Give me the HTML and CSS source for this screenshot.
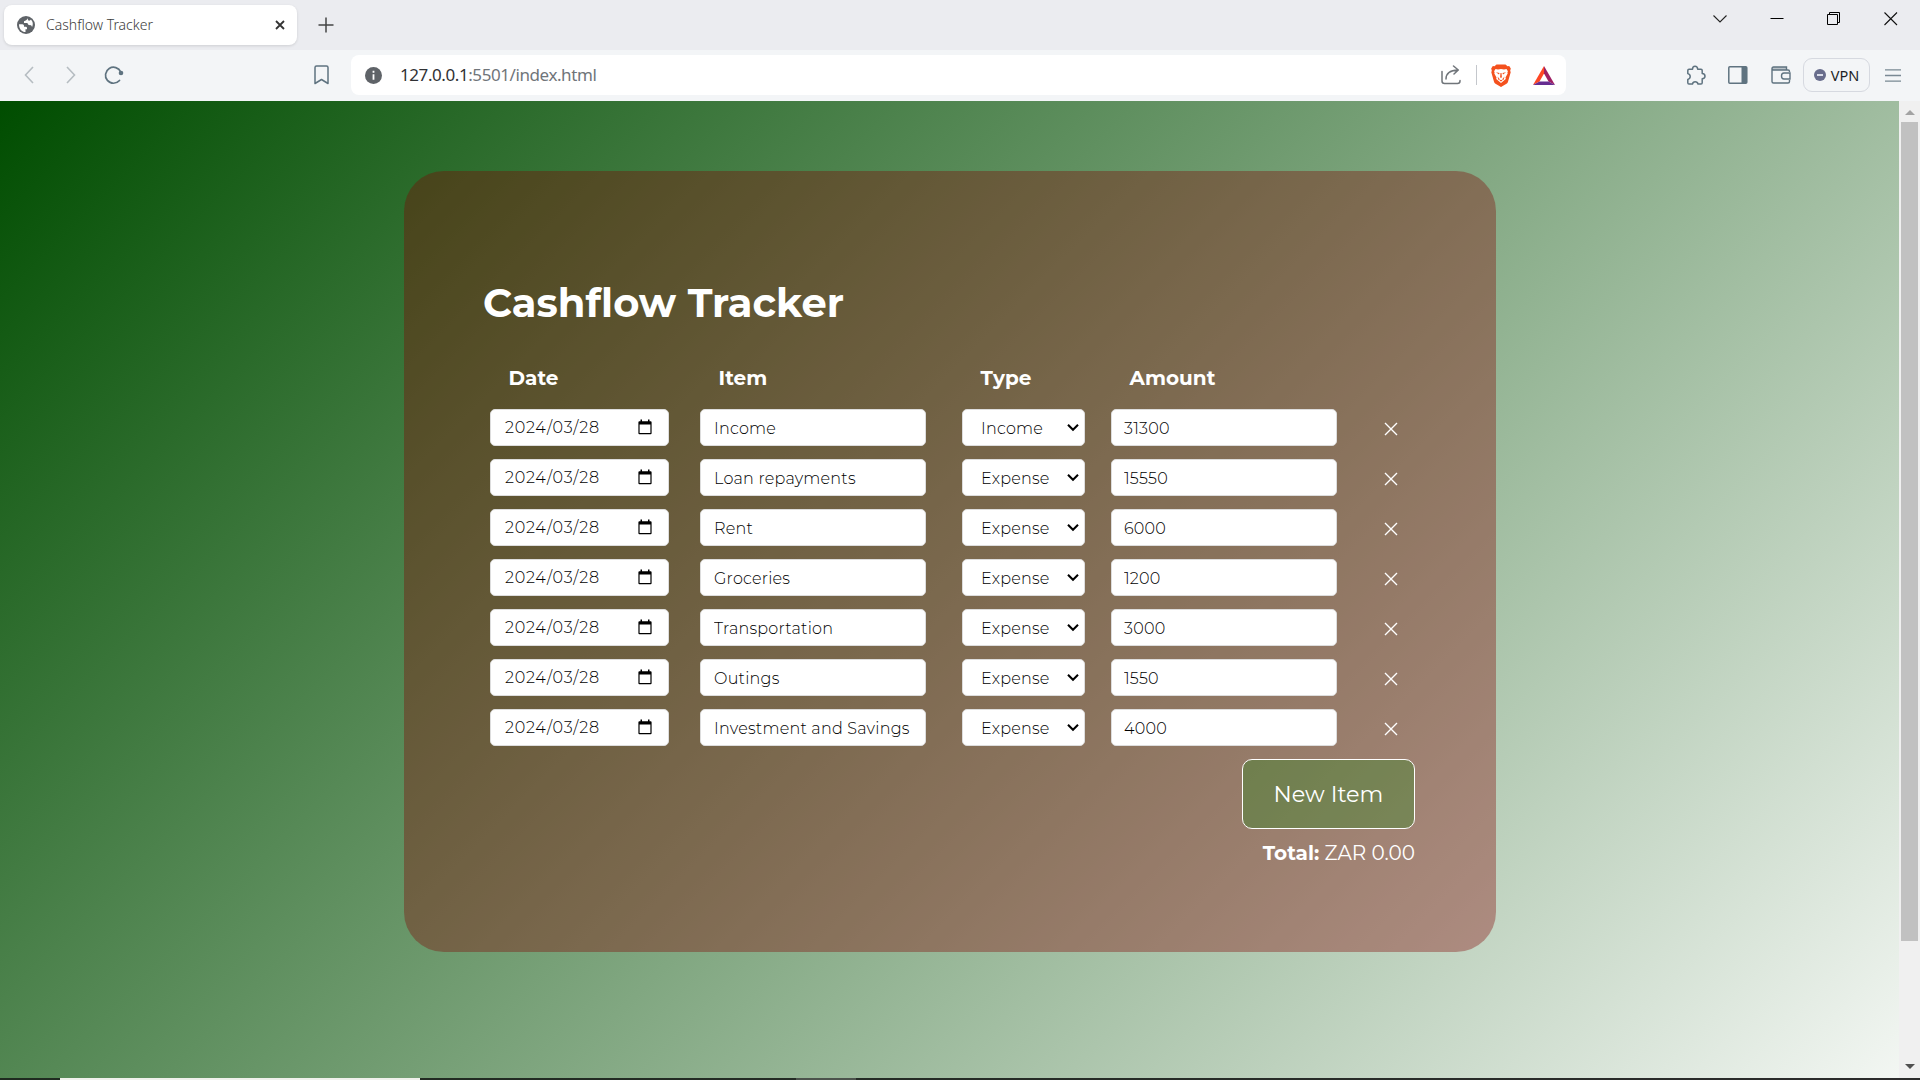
FILE: index.html
```html
<!DOCTYPE html>
<html lang="en">
<head>
<meta charset="utf-8">
<title>Cashflow Tracker</title>
<link rel="stylesheet" href="styles.css">
</head>
<body>
<svg class="defs" aria-hidden="true">
  <symbol id="cal" viewBox="0 0 14 16"><path d="M2.500 0.500h1.500v1.700h6V0.500h1.500v1.700h1.100q1 0 1 1v11q0 1-1 1H1.400q-1 0-1-1V3.200q0-1 1-1H2.500zM1.600 5.500v8.500h10.800V5.500z" fill-rule="evenodd"/></symbol>
  <symbol id="chev" viewBox="0 0 12 9"><path d="M1 1.700l5 5 5-5" fill="none" stroke="#000" stroke-width="2.100"/></symbol>
  <symbol id="cross" viewBox="0 0 14 14"><path d="M1 1l12 12M13 1L1 13" fill="none" stroke="#fff" stroke-width="1.400"/></symbol>
</svg>

<div class="tabs">
  <div class="tab">
    <svg class="globe" width="18" height="18" viewBox="0 0 18 18"><circle cx="9" cy="9" r="9" fill="#5f6368"/><path d="M2 8.200h3.500q1.500 0 1.500 1.500v1h1.800q1.200 0 1.200 1.200v1.300H8.500v2.800C4.800 16 2 13 2 8.200zM10 1.900c.5 1-.2 2-1.300 2.500L7 5.300v1.800h3.300l1.300 1.800 2.500.3 1 1.900c1.200-2.600 1-5.500-1.200-7.500-.5 1-1.600 1.500-2.400 1z" fill="#fff"/></svg>
    <span class="tab-title">Cashflow Tracker</span>
    <svg width="10" height="10" viewBox="0 0 10 10"><path d="M1 1l8 8M9 1L1 9" stroke="#333" stroke-width="1.800"/></svg>
  </div>
  <svg class="plus" width="16" height="16" viewBox="0 0 16 16"><path d="M8 .5v15M.5 8h15" stroke="#444" stroke-width="1.500"/></svg>
  <div class="window-buttons">
    <svg width="14" height="14" viewBox="0 0 14 14"><path d="M.5 3.500l6.500 6.500 6.500-6.500" fill="none" stroke="#222" stroke-width="1.100"/></svg>
    <svg width="14" height="14" viewBox="0 0 14 14"><path d="M.5 6.500h13" stroke="#000" stroke-width="1"/></svg>
    <svg width="14" height="14" viewBox="0 0 14 14"><path d="M.5 2.500h10v10H.5zM2.500 2.500v-2h10v10h-2" fill="none" stroke="#000" stroke-width="1"/></svg>
    <svg width="14" height="14" viewBox="0 0 14 14"><path d="M.5 .5l12.500 12.500M13 .5l-12.500 12.500" stroke="#111" stroke-width="1.100"/></svg>
  </div>
</div>

<div class="toolbar">
  <div class="nav">
    <svg width="10" height="18" viewBox="0 0 10 18"><path d="M9 1L1.500 9 9 17" fill="none" stroke="#b6bdc2" stroke-width="1.600"/></svg>
    <svg width="10" height="18" viewBox="0 0 10 18"><path d="M1 1l7.500 8L1 17" fill="none" stroke="#b6bdc2" stroke-width="1.600"/></svg>
    <svg width="20" height="20" viewBox="0 0 20 20"><path d="M15.500 15.500A8 8 0 1 1 16.800 7" fill="none" stroke="#5f7380" stroke-width="1.700" stroke-linecap="round"/><circle cx="17" cy="8" r="2.300" fill="#5f7380"/></svg>
  </div>
  <svg class="bookmark" width="15" height="20" viewBox="0 0 15 20"><path d="M1 2.500Q1 1 2.500 1h10Q14 1 14 2.500V18.500L7.500 14.500 1 18.500z" fill="none" stroke="#5f7380" stroke-width="1.500" stroke-linejoin="round"/></svg>
  <div class="address">
    <svg width="17" height="17" viewBox="0 0 17 17"><circle cx="8.500" cy="8.500" r="8.500" fill="#5f6368"/><path d="M8.500 3.700v2M8.500 7.300v5.500" stroke="#fff" stroke-width="1.800"/></svg>
    <span class="url"><b>127.0.0.1</b>:5501/index.html</span>
    <svg class="share" width="20" height="20" viewBox="0 0 20 20"><path d="M1 6.500v9.500Q1 18.500 3.500 18.500H16.500Q19 18.500 19 16v-.5M5 14Q5 5.500 17 5M12.500 1l4.800 4-4.300 4" fill="none" stroke="#70757a" stroke-width="1.500" stroke-linecap="round" stroke-linejoin="round"/></svg>
    <i class="sep"></i>
    <svg class="lion" width="20" height="23" viewBox="0 0 20 23"><path d="M5.500 0.500h9l2 1.800 1.700-.2L19.800 4.500l-.6 2.300.5 1.400-2.700 9.600q-.4 1.300-1.500 2L10 23l-5.500-3.200q-1.100-.7-1.500-2L.3 8.200l.5-1.400L.2 4.500 1.800 2.100l1.700.2z" fill="#f4511e"/><path d="M4.500 5l2.500.5 3-.6 3 .6 2.500-.5 1.400 2.300-.5 1.300.3 1-2.200 4 .3 1.500L10 19l-4.800-3.900.3-1.500-2.200-4 .3-1L3.100 7.300z" fill="#fff"/><path d="M5 8.300l3.500.8-.5 1.300zM15 8.300l-3.500.8.5 1.300zM9.500 9h1l.4 4.200-.9.800-.9-.8zM6.500 12.500l2.500 3-1.500.5zM13.500 12.500l-2.500 3 1.500.5zM8.400 16.500l1.600-.8 1.600.8-1.600 1z" fill="#f4511e"/></svg>
    <svg width="22" height="19" viewBox="0 0 22 19"><path d="M11 0L0 19l6.500-3.500L11 7.500z" fill="#ff4724"/><path d="M11 0l11 19-6.500-3.500L11 7.500z" fill="#9e1f63"/><path d="M0 19h22l-6.500-3.500h-9z" fill="#662d91"/></svg>
  </div>
  <div class="tools">
    <svg width="20" height="21" viewBox="0 0 20 21"><path d="M3 4.200H6.500Q6.500 1.300 9 1.300t2.700 2.900H15q1.200 0 1.200 1.200V8.500Q19 8.800 19 11.200T16.200 13.700v4q0 1.300-1.200 1.300H12Q11.500 16.800 9.200 16.800T6.500 19H3Q1.800 19 1.800 17.700V14.500Q4.200 13.700 4.200 11.500T1.800 8.600V5.400Q1.800 4.200 3 4.200z" fill="none" stroke="#5f7380" stroke-width="1.500" stroke-linejoin="round"/></svg>
    <svg width="20" height="18" viewBox="0 0 20 18"><rect x=".8" y=".8" width="18" height="16.400" rx="1" fill="none" stroke="#5f7380" stroke-width="1.500"/><path d="M13.500 1H19v16h-5.500z" fill="#5f7380"/></svg>
    <svg width="20" height="18" viewBox="0 0 20 18"><path d="M1 1h14v3H1z" fill="#b9c2c8"/><path d="M18.500 6V5.500q0-1.500-1.500-1.500H2.500Q1 4 1 2.500T2.500 1H15.500V4M1 2.500v13Q1 17 2.500 17H17q1.500 0 1.500-1.500V14M19 7H13q-2.500 0-2.500 3t2.500 3h6z" fill="none" stroke="#5f7380" stroke-width="1.400"/></svg>
    <div class="vpn"><svg width="12" height="12" viewBox="0 0 12 12"><circle cx="6" cy="6" r="6" fill="#686d8c"/><path d="M3 6h6" stroke="#e8eaf5" stroke-width="1.800"/></svg><span>VPN</span></div>
    <svg width="16" height="13" viewBox="0 0 16 13"><path d="M0 .8h16M0 6.500h16M0 12.200h16" stroke="#7a8994" stroke-width="1.300"/></svg>
  </div>
</div>

<div class="viewport">
  <main class="page">
    <section class="card">
      <h1>Cashflow Tracker</h1>
      <div class="row head"><span>Date</span><span>Item</span><span>Type</span><span>Amount</span></div>
      <div class="row"><div class="field date">2024/03/28<svg width="14" height="16"><use href="#cal"/></svg></div><input class="field" value="Income"><div class="field type">Income<svg width="12" height="9"><use href="#chev"/></svg></div><input class="field amount" value="31300"><svg class="delete" width="14" height="14"><use href="#cross"/></svg></div>
      <div class="row"><div class="field date">2024/03/28<svg width="14" height="16"><use href="#cal"/></svg></div><input class="field" value="Loan repayments"><div class="field type">Expense<svg width="12" height="9"><use href="#chev"/></svg></div><input class="field amount" value="15550"><svg class="delete" width="14" height="14"><use href="#cross"/></svg></div>
      <div class="row"><div class="field date">2024/03/28<svg width="14" height="16"><use href="#cal"/></svg></div><input class="field" value="Rent"><div class="field type">Expense<svg width="12" height="9"><use href="#chev"/></svg></div><input class="field amount" value="6000"><svg class="delete" width="14" height="14"><use href="#cross"/></svg></div>
      <div class="row"><div class="field date">2024/03/28<svg width="14" height="16"><use href="#cal"/></svg></div><input class="field" value="Groceries"><div class="field type">Expense<svg width="12" height="9"><use href="#chev"/></svg></div><input class="field amount" value="1200"><svg class="delete" width="14" height="14"><use href="#cross"/></svg></div>
      <div class="row"><div class="field date">2024/03/28<svg width="14" height="16"><use href="#cal"/></svg></div><input class="field" value="Transportation"><div class="field type">Expense<svg width="12" height="9"><use href="#chev"/></svg></div><input class="field amount" value="3000"><svg class="delete" width="14" height="14"><use href="#cross"/></svg></div>
      <div class="row"><div class="field date">2024/03/28<svg width="14" height="16"><use href="#cal"/></svg></div><input class="field" value="Outings"><div class="field type">Expense<svg width="12" height="9"><use href="#chev"/></svg></div><input class="field amount" value="1550"><svg class="delete" width="14" height="14"><use href="#cross"/></svg></div>
      <div class="row"><div class="field date">2024/03/28<svg width="14" height="16"><use href="#cal"/></svg></div><input class="field" value="Investment and Savings"><div class="field type">Expense<svg width="12" height="9"><use href="#chev"/></svg></div><input class="field amount" value="4000"><svg class="delete" width="14" height="14"><use href="#cross"/></svg></div>
      <button class="new-item">New Item</button>
      <p class="total"><b>Total:</b> ZAR 0.00</p>
    </section>
  </main>
  <div class="scrollbar">
    <svg width="10" height="5" viewBox="0 0 10 5"><path d="M0 5l5-5 5 5z" fill="#a3a3a3"/></svg>
    <div class="thumb"></div>
    <svg width="10" height="5" viewBox="0 0 10 5"><path d="M0 0l5 5 5-5z" fill="#505050"/></svg>
  </div>
</div>
<div class="taskbar"><i class="active"></i><i class="hint"></i></div>
</body>
</html>
```
FILE: styles.css
```css
* { box-sizing: border-box; }
body {
  margin: 0;
  width: 1920px;
  height: 1080px;
  overflow: hidden;
  display: flex;
  flex-direction: column;
  font-family: "Noto Sans", sans-serif;
}
svg { display: block; flex: none; }
.defs { display: none; }

/* browser chrome */
.tabs {
  height: 50px;
  background: #ebecf0;
  display: flex;
  padding: 5px 22px 5px 4px;
}
.tab {
  width: 293px;
  height: 40px;
  background: #fff;
  border-radius: 8px;
  box-shadow: 0 1px 3px rgba(0, 0, 0, .12);
  display: flex;
  align-items: center;
  padding: 0 12px 0 13px;
}
.tab-title {
  margin: -1px auto 0 11px;
  font-size: 14px;
  font-weight: 350;
  letter-spacing: 0;
  color: #3c3c3c;
}
.plus { margin: 12px 0 0 21px; }
.window-buttons {
  margin: 7px 0 0 auto;
  display: flex;
  gap: 43px;
}
.toolbar {
  height: 51px;
  background: #f3f5f7;
  display: flex;
  align-items: center;
  padding: 0 19px 1px 24px;
}
.nav {
  display: flex;
  align-items: center;
  gap: 32px;
  width: 290px;
}
.nav svg:last-child { margin-left: -4px; }
.address {
  width: 1215px;
  height: 40px;
  margin-left: 22px;
  background: #fff;
  border-radius: 8px;
  display: flex;
  align-items: center;
  padding: 0 11px 0 14px;
}
.url {
  margin: -2px auto 0 18px;
  font-size: 17px;
  letter-spacing: -.42px;
  color: #70757a;
}
.url b { font-weight: 400; color: #303134; }
.share { margin-right: 1px; }
.sep { width: 1px; height: 20px; margin: 0 14px 0 14px; background: #c4c7cc; }
.lion { margin-right: 22px; }
.tools {
  margin-left: auto;
  display: flex;
  align-items: center;
  gap: 22px;
}
.tools > svg:nth-child(3) { margin-left: 1px; }
.vpn {
  width: 67px;
  height: 34px;
  margin: 0 -7px 0 -10px;
  border: 1px solid #d6d9e0;
  border-radius: 9px;
  display: flex;
  align-items: center;
  justify-content: center;
  gap: 5px;
  font-size: 14.500px;
  color: #1d1f25;
}

/* page */
.viewport { height: 977px; display: flex; overflow: hidden; }
.page {
  width: 1899px;
  height: 1125px;
  padding: 70px 0 0 404px;
  background: linear-gradient(135deg, #004d00, #fff);
  font-family: Montserrat, sans-serif;
  color: #fff;
}
.card {
  width: 1092px;
  height: 781px;
  padding: 107px 81px 0 80px;
  border-radius: 40px;
  background: rgba(130, 0, 0, .35);
  display: flex;
  flex-direction: column;
}
h1 {
  margin: 0 0 34px -1px;
  font-size: 40px;
  line-height: 50px;
  font-weight: 700;
  letter-spacing: .04px;
}
.row {
  display: grid;
  grid-template-columns: 210px 262px 149px 273px 1fr;
  height: 37px;
  margin: 0 0 13px 6px;
}
.head {
  height: 32px;
  margin-bottom: 15px;
  font-size: 20px;
  line-height: 32px;
  font-weight: 700;
}
.head span { padding-left: 18.600px; }
.field {
  width: 226px;
  height: 37px;
  padding: 2px 12px 0 13px;
  border: 1px solid #ddd;
  border-radius: 5px;
  background: #fff;
  color: #000;
  font: 300 16px Montserrat, sans-serif;
  letter-spacing: .22px;
  display: flex;
  align-items: center;
  justify-content: space-between;
}
.date {
  width: 179px;
  padding: 0 16px 0 14px;
  letter-spacing: .75px;
}
.date svg { margin-top: -2px; }
.type { width: 123px; padding: 1px 5px 0 18px; }
.type svg { margin-top: -1px; }
.amount { padding-left: 12px; }
.delete { margin-top: 13px; }
.new-item {
  align-self: flex-end;
  width: 173px;
  height: 70px;
  border: 1px solid #fff;
  border-radius: 10px;
  background: rgba(0, 140, 0, .25);
  color: #fff;
  font: 400 22.400px Montserrat, sans-serif;
}
.total {
  margin: 12px 0 0;
  text-align: right;
  font-size: 20px;
  line-height: 24px;
}

/* scrollbar and taskbar edge */
.scrollbar {
  width: 21px;
  background: #f0f0f0;
  display: flex;
  flex-direction: column;
  align-items: center;
  padding: 9px 0;
}
.thumb { width: 17px; height: 820px; margin: 7px 0 123px; background: #c1c1c1; }
.taskbar {
  height: 2px;
  background: linear-gradient(90deg, #1f2b20, #2c2c2c);
  display: flex;
  padding-left: 60px;
}
.active { width: 360px; background: #f0f1ec; }
.hint { width: 60px; margin-left: 376px; background: #4c534c; }
```
